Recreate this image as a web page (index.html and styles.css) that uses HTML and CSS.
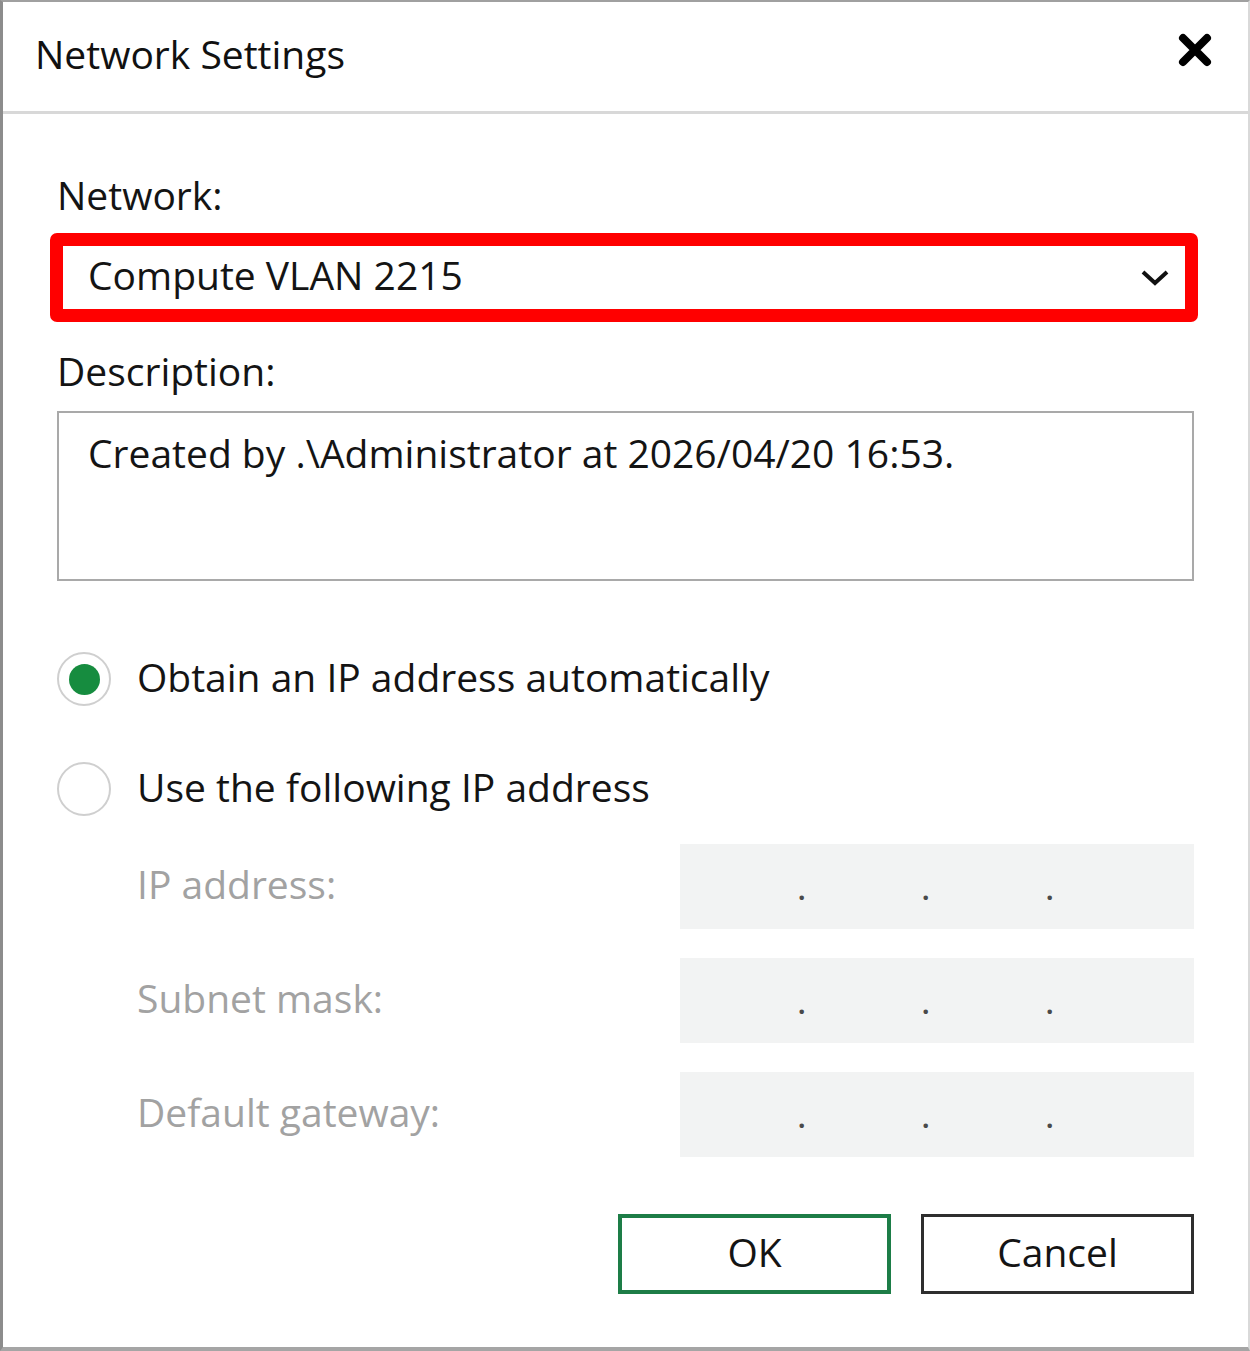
FILE: index.html
```html
<!DOCTYPE html>
<html lang="en">
<head>
    <meta charset="UTF-8">
    <title>Network Settings</title>
    <link rel="stylesheet" href="styles.css">
</head>
<body>
    <div class="dialog">
        <div class="titlebar">
            <span class="title">Network Settings</span>
            <span class="close">
                <svg width="36" height="36" viewBox="0 0 36 36">
                    <path d="M6 6 L30 30 M30 6 L6 30" stroke="#000" stroke-width="8" stroke-linecap="round" fill="none"/>
                </svg>
            </span>
        </div>
        <div class="content">
            <div class="label label_net">Network:</div>
            <div class="select">
                <span class="select_text">Compute VLAN 2215</span>
                <svg class="chevron" width="30" height="18" viewBox="0 0 30 18">
                    <path d="M3 3 L15 14 L27 3" stroke="#111" stroke-width="4" fill="none"/>
                </svg>
            </div>
            <div class="label label_desc">Description:</div>
            <div class="textarea">Created by .\Administrator at 2026/04/20 16:53.</div>

            <div class="radio_row radio_first">
                <span class="radio checked"></span>
                <span class="radio_text">Obtain an IP address automatically</span>
            </div>
            <div class="radio_row radio_second">
                <span class="radio"></span>
                <span class="radio_text">Use the following IP address</span>
            </div>

            <div class="ip_rows">
                <div class="ip_row">
                    <span class="ip_label">IP address:</span>
                    <div class="ip_field">
                        <span class="seg"></span><span class="dot">.</span><span class="seg"></span><span class="dot">.</span><span class="seg"></span><span class="dot">.</span><span class="seg"></span>
                    </div>
                </div>
                <div class="ip_row">
                    <span class="ip_label">Subnet mask:</span>
                    <div class="ip_field">
                        <span class="seg"></span><span class="dot">.</span><span class="seg"></span><span class="dot">.</span><span class="seg"></span><span class="dot">.</span><span class="seg"></span>
                    </div>
                </div>
                <div class="ip_row">
                    <span class="ip_label">Default gateway:</span>
                    <div class="ip_field">
                        <span class="seg"></span><span class="dot">.</span><span class="seg"></span><span class="dot">.</span><span class="seg"></span><span class="dot">.</span><span class="seg"></span>
                    </div>
                </div>
            </div>

            <div class="buttons">
                <button class="btn btn_ok">OK</button>
                <button class="btn">Cancel</button>
            </div>
        </div>
    </div>
</body>
</html>
```

FILE: styles.css
```css
body {
    margin: 0;
    font-family: "Open Sans", "Noto Sans", sans-serif;
    font-size: 39px;
    line-height: 52px;
    color: #141414;
}

.dialog {
    box-sizing: border-box;
    width: 1250px;
    height: 1351px;
    background-color: #fff;
    border-left: 3px solid #8c8c8c;
    border-top: 2px solid #a0a0a0;
    border-bottom: 4px solid #a5a5a5;
    border-right: 2px solid #d9d9d9;
}

.titlebar {
    height: 109px;
    border-bottom: 3px solid #d8d8d8;
    display: flex;
    align-items: center;
    justify-content: space-between;
    padding: 0 35px 0 32px;
}
.titlebar .title {
    color: #111;
    margin-bottom: 6px;
}
.titlebar .close {
    display: flex;
    margin-bottom: 14px;
}

.content {
    padding: 0 54px 0 54px;
}

.label_net {
    margin-top: 55px;
}
.label_desc {
    margin-top: 23px;
}

.select {
    box-sizing: border-box;
    height: 89px;
    margin: 12px -4px 0 -7px;
    border: 13px solid #ff0000;
    border-radius: 7px;
    display: flex;
    align-items: center;
    justify-content: space-between;
    padding: 0 15px 0 25px;
}
.select .select_text {
    margin-bottom: 5px;
}
.select .chevron {
    display: block;
}

.textarea {
    box-sizing: border-box;
    height: 170px;
    margin-top: 14px;
    border: 2px solid #a9a9a9;
    padding: 14px 29px;
}

.radio_row {
    display: flex;
    align-items: center;
    gap: 26px;
    height: 52px;
}
.radio_text {
    margin-bottom: 5px;
}
.radio_first {
    margin-top: 72px;
}
.radio_second {
    margin-top: 58px;
}
.radio {
    box-sizing: border-box;
    width: 54px;
    height: 54px;
    border-radius: 50%;
    border: 2px solid #cfcfcf;
    display: flex;
    align-items: center;
    justify-content: center;
    flex-shrink: 0;
}
.radio.checked::after {
    content: "";
    width: 31px;
    height: 31px;
    border-radius: 50%;
    background-color: #168c3f;
}

.ip_rows {
    margin-top: 29px;
    display: flex;
    flex-direction: column;
    gap: 29px;
}
.ip_row {
    height: 85px;
    display: flex;
    align-items: center;
    justify-content: space-between;
    padding-left: 80px;
}
.ip_label {
    color: #a2a2a2;
    margin-bottom: 5px;
}
.ip_field {
    width: 514px;
    height: 85px;
    background-color: #f2f3f3;
    display: flex;
}
.ip_field .seg {
    width: 118px;
}
.ip_field .dot {
    width: 6px;
    text-align: center;
    font-size: 26px;
    font-weight: bold;
    line-height: 85px;
    padding-top: 4px;
    color: #4a4a4a;
}

.buttons {
    margin-top: 57px;
    display: flex;
    justify-content: flex-end;
    gap: 30px;
}
.btn {
    box-sizing: border-box;
    width: 273px;
    height: 80px;
    padding: 0 0 6px 0;
    font-family: inherit;
    font-size: 39px;
    color: #141414;
    background-color: #fff;
    border: 3px solid #2e2e2e;
    cursor: pointer;
}
.btn_ok {
    border: 4px solid #1d7d47;
}
```
